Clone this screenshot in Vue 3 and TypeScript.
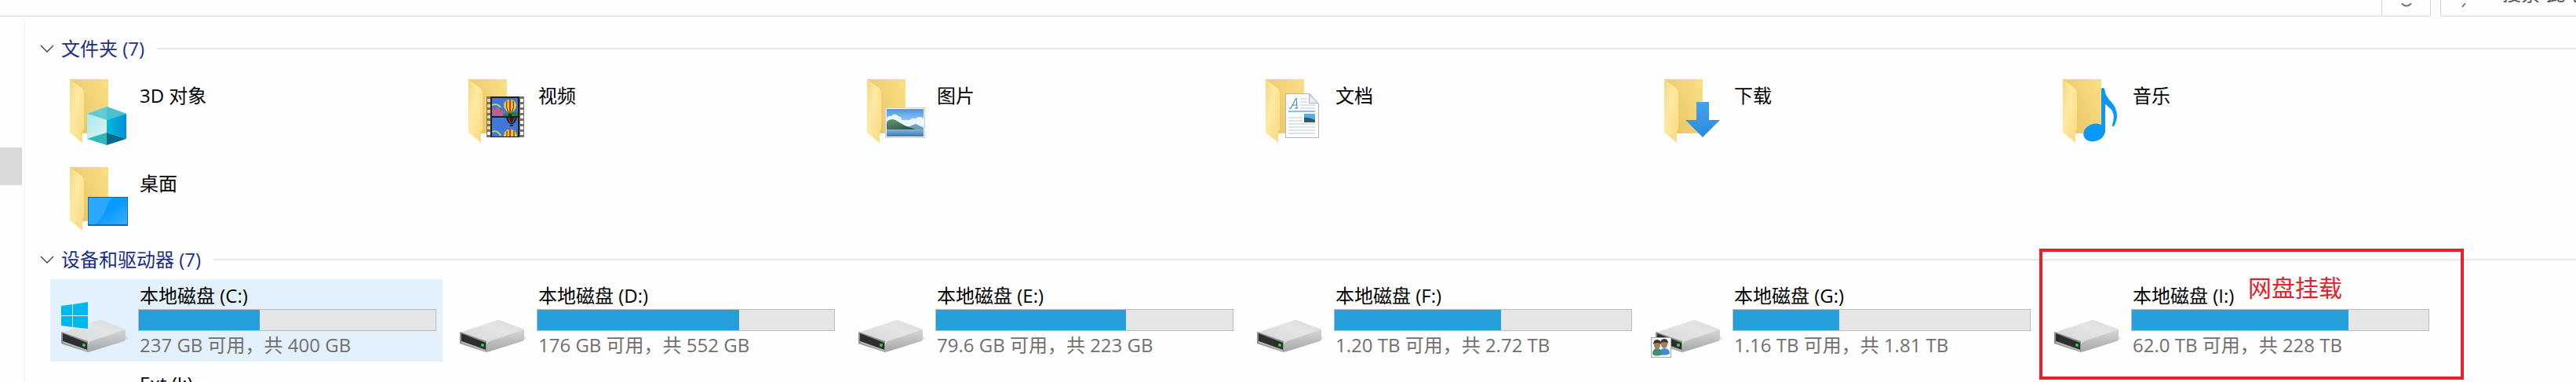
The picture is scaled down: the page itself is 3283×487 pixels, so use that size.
<script setup lang="ts">
import { ref } from 'vue'

type FolderKind = 'cube' | 'video' | 'picture' | 'document' | 'download' | 'music' | 'desktop'

interface Folder {
  name: string
  kind: FolderKind
}

interface Drive {
  name: string
  detail: string
  used: number
  system?: boolean
  shared?: boolean
  selected?: boolean
  note?: string
}

const folders: Folder[] = [
  { name: '3D 对象', kind: 'cube' },
  { name: '视频', kind: 'video' },
  { name: '图片', kind: 'picture' },
  { name: '文档', kind: 'document' },
  { name: '下载', kind: 'download' },
  { name: '音乐', kind: 'music' },
  { name: '桌面', kind: 'desktop' },
]

const drives: Drive[] = [
  { name: '本地磁盘 (C:)', detail: '237 GB 可用，共 400 GB', used: 40.7, system: true, selected: true },
  { name: '本地磁盘 (D:)', detail: '176 GB 可用，共 552 GB', used: 68 },
  { name: '本地磁盘 (E:)', detail: '79.6 GB 可用，共 223 GB', used: 64 },
  { name: '本地磁盘 (F:)', detail: '1.20 TB 可用，共 2.72 TB', used: 56 },
  { name: '本地磁盘 (G:)', detail: '1.16 TB 可用，共 1.81 TB', used: 35.7, shared: true },
  { name: '本地磁盘 (I:)', detail: '62.0 TB 可用，共 228 TB', used: 73, note: '网盘挂载' },
  { name: 'Ext (J:)', detail: '', used: 0 },
]

const foldersOpen = ref(true)
const drivesOpen = ref(true)
const perforations = [35, 42, 49, 56, 63, 70, 77]
</script>

<template>
  <div class="explorer">
    <svg class="defs" aria-hidden="true">
      <defs>
        <linearGradient id="folder-back" x1="0" y1="0.8" x2="1" y2="0.2">
          <stop offset="0.2" stop-color="#e9c868" />
          <stop offset="1" stop-color="#fbdd83" />
        </linearGradient>
        <linearGradient id="folder-flap" x1="0" y1="0" x2="1" y2="1">
          <stop offset="0" stop-color="#f5d67c" />
          <stop offset="0.4" stop-color="#ffe9a3" />
          <stop offset="1" stop-color="#f8d980" />
        </linearGradient>
        <linearGradient id="cube-right" x1="0" y1="0" x2="1" y2="0">
          <stop offset="0" stop-color="#00bcd2" />
          <stop offset="1" stop-color="#0090dc" />
        </linearGradient>
        <linearGradient id="cube-left" x1="0" y1="0" x2="1" y2="1">
          <stop offset="0" stop-color="#a9e8ec" />
          <stop offset="1" stop-color="#dcf5f6" />
        </linearGradient>
        <linearGradient id="screen" x1="0" y1="0" x2="1" y2="1">
          <stop offset="0" stop-color="#0c9bff" />
          <stop offset="0.5" stop-color="#0a99fd" />
          <stop offset="1" stop-color="#37aeff" />
        </linearGradient>
        <linearGradient id="sky" x1="0" y1="0" x2="0" y2="1">
          <stop offset="0" stop-color="#4a94e4" />
          <stop offset="1" stop-color="#d4ebfb" />
        </linearGradient>
        <linearGradient id="sea" x1="0" y1="0" x2="0" y2="1">
          <stop offset="0" stop-color="#86b4da" />
          <stop offset="1" stop-color="#3f78b4" />
        </linearGradient>
        <linearGradient id="hill" x1="0" y1="0" x2="1" y2="1">
          <stop offset="0" stop-color="#6d9878" />
          <stop offset="1" stop-color="#1d5038" />
        </linearGradient>
        <linearGradient id="arrow" x1="0" y1="0" x2="0" y2="1">
          <stop offset="0" stop-color="#46a0ea" />
          <stop offset="1" stop-color="#2b8be0" />
        </linearGradient>
        <linearGradient id="drive-top" x1="0" y1="1" x2="1" y2="0">
          <stop offset="0" stop-color="#d4d5d7" />
          <stop offset="0.6" stop-color="#e4e5e7" />
          <stop offset="1" stop-color="#dadbdd" />
        </linearGradient>
        <linearGradient id="drive-side" x1="0" y1="0" x2="0" y2="1">
          <stop offset="0" stop-color="#d6d7d9" />
          <stop offset="1" stop-color="#a5a6a8" />
        </linearGradient>
      </defs>
    </svg>

    <header class="toolbar">
      <div class="address"></div>
      <button class="refresh" type="button" aria-label="刷新">
        <svg viewBox="0 0 24 24" width="24" height="24" aria-hidden="true">
          <path d="M6 0a7 7 0 0 0 12 0" fill="none" stroke="#777" stroke-width="2" />
        </svg>
      </button>
      <label class="search">
        <svg viewBox="0 0 24 24" width="24" height="24" aria-hidden="true">
          <path d="M9 0 5 5" fill="none" stroke="#777" stroke-width="2" />
        </svg>
        <input type="text" aria-label="搜索" placeholder="搜索“此电脑”" />
      </label>
    </header>

    <div class="body">
      <aside class="nav"><div class="thumb"></div></aside>

      <main class="pane">
        <section class="group">
          <h2 class="heading">
            <button class="toggle" type="button" :aria-expanded="foldersOpen" @click="foldersOpen = !foldersOpen">
              <svg class="chevron" viewBox="0 0 18 10" aria-hidden="true"><path d="M1 1l8 8 8-8" /></svg>
              文件夹 (7)
            </button>
          </h2>
          <ul v-if="foldersOpen" class="tiles">
            <li v-for="f in folders" :key="f.name" class="tile">
              <svg class="icon" viewBox="-8 0 104 96" aria-hidden="true">
                <path d="M9 10h49v69H9z" fill="url(#folder-back)" />
                <path d="M9 10l15 11q3 3 3 7v45l-2 5v13L9 78z" fill="url(#folder-flap)" />

                <g v-if="f.kind === 'cube'">
                  <path d="M56 45l25 9-25 8-25-8z" fill="#5fcbd6" />
                  <path d="M56 45v17l25-8z" fill="#4dbfd0" />
                  <path d="M31 54l25 8v24l-25 0z" fill="url(#cube-left)" />
                  <path d="M56 62l25-8v32l-25-8z" fill="url(#cube-right)" />
                  <path d="M31 86l25-8v16z" fill="#2fb8b8" />
                  <path d="M56 78l25 8-25 8z" fill="#046b8c" />
                </g>

                <g v-else-if="f.kind === 'video'">
                  <path d="M32 32h48v52H32z" fill="#77736c" />
                  <path d="M37 32h37v52H37z" fill="#20201e" />
                  <g v-for="y in perforations" :key="y">
                    <rect x="33" :y="y" width="4" height="4" :fill="y < 77 ? '#f3d57a' : '#fff'" />
                    <rect x="75" :y="y" width="4" height="4" fill="#fff" />
                  </g>
                  <path d="M39 34h33v23H39zM39 59h33v24H39z" fill="#3f78d8" />
                  <path d="M51 57q10-6 21-5v5z" fill="#16863c" />
                  <path d="M39 45l4 5 3-5 4 6 3-2v8H39z" fill="#df5868" />
                  <path d="M39 51l4 4 3-4 4 6H39z" fill="#9965cc" />
                  <path d="M39 43q7-3 11 3M39 77q7-3 11 5" fill="none" stroke="#b6d36e" stroke-width="2" />
                  <path d="M54 43a8 7 0 0 1 16 0q0 5-6 10h-4q-6-5-6-10z" fill="#f5c72b" />
                  <path d="M58 38q-2 7 2 15M66 38q2 7-2 15" fill="none" stroke="#3f1f1b" stroke-width="1" />
                  <path d="M62 36v17" stroke="#d92922" stroke-width="2" />
                  <path d="M60 54h4v3h-4z" fill="#33231d" />
                  <path d="M57 59h14q-1 5-5 8h-4q-4-3-5-8z" fill="#232330" />
                  <path d="M60 59l3 7M68 59l-3 7" stroke="#d83a40" stroke-width="1" />
                  <path d="M62 68h4v2h-4z" fill="#26221f" />
                  <path d="M54 83q0-9 8-9t9 9z" fill="#f5c72b" />
                  <path d="M58 76v7M67 76v7" stroke="#3f1f1b" stroke-width="1" />
                  <path d="M62 74v9" stroke="#d92922" stroke-width="2" />
                </g>

                <g v-else-if="f.kind === 'picture'">
                  <path d="M32 46h51v39H32z" fill="#bfd3e4" />
                  <path d="M33 47h49v37H33z" fill="#fff" />
                  <path d="M34 48h47v26H34z" fill="url(#sky)" />
                  <path d="M34 60q2-4 6-3 4-5 9 0 4 1 4 5h10q4-3 8-2 5-4 10 0v10H34z" fill="#eaf5fd" />
                  <path d="M54 74l12-5 5-2 10 5v3H54z" fill="#6f9dbb" />
                  <path d="M34 64q6-5 11-2l12 7 14 5H34z" fill="url(#hill)" />
                  <path d="M34 74h47v9H34z" fill="url(#sea)" />
                </g>

                <g v-else-if="f.kind === 'document'">
                  <path d="M34 28h31l12 13v44H34z" fill="#aeb6bc" />
                  <path d="M35 29h29v12h12v43H35z" fill="#fbfcfd" />
                  <path d="M65 30l10 10H65z" fill="#e7ebee" />
                  <path
                    d="M53 35h9M53 39h9M53 43h19M53 47h19M38 59h18M38 63h18M38 67h34M38 71h34M38 75h34M38 79h34"
                    stroke="#c3cbd0"
                  />
                  <path d="M38 51h34" stroke="#1c86c6" stroke-width="1" />
                  <path d="M39 47h3m4 0h4M41 47l7-13 1 13M43 43h5" fill="none" stroke="#1c86c6" stroke-width="1" />
                  <path d="M58 54h14v11H58z" fill="#57aee9" />
                  <path d="M58 59q5-1 14 3v3H58z" fill="#2a5f6a" />
                </g>

                <path
                  v-else-if="f.kind === 'download'"
                  d="M50 39h16v23h14L58 84 36 62h14z"
                  fill="url(#arrow)"
                />

                <g v-else-if="f.kind === 'music'" fill="#0a97f5">
                  <path
                    d="M58 22q2-2 4 0 1 9 7 15 9 9 9 20 0 6-4 13-3 0-2-2 5-15-4-22-3-3-5-4v36H58z"
                  />
                  <ellipse cx="49" cy="78" rx="14" ry="11" transform="rotate(-20 49 78)" />
                </g>

                <g v-else>
                  <path d="M32 48h51v37H32z" fill="#16689f" />
                  <path d="M33 49h49v34H33z" fill="url(#screen)" />
                  <path d="M33 49h31q-5 3-8 12-4 12-14 22h-9z" fill="#2aa7ff" />
                </g>
              </svg>
              <span class="folder-name">{{ f.name }}</span>
            </li>
          </ul>
        </section>

        <section class="group">
          <h2 class="heading">
            <button class="toggle" type="button" :aria-expanded="drivesOpen" @click="drivesOpen = !drivesOpen">
              <svg class="chevron" viewBox="0 0 18 10" aria-hidden="true"><path d="M1 1l8 8 8-8" /></svg>
              设备和驱动器 (7)
            </button>
          </h2>
          <ul v-if="drivesOpen" class="tiles">
            <li v-for="d in drives" :key="d.name" class="tile" :class="{ selected: d.selected }">
              <svg class="icon" viewBox="-8 0 104 96" aria-hidden="true">
                <path d="M32 89l48-16 4-1-3-4z" fill="#00000014" />
                <path d="M-2 64L43 49q4-2 8 0l27 10q2 1 1 2L34 77z" fill="url(#drive-top)" />
                <path d="M32 79q1-3 4-4l44-15v12q0 2-2 3L36 88l-4 1z" fill="url(#drive-side)" />
                <path d="M-2 63l34 12v14L-2 78z" fill="#8d8f91" />
                <path d="M0 65l31 12v9L0 75z" fill="#2e2e2f" />
                <path d="M0 75l31 11v2L0 77z" fill="#b9babc" />
                <circle cx="27" cy="80" r="2" fill="#22dd33" />
                <path
                  v-if="d.system"
                  d="M-2 30l14-2v14H-2zM13 28l19-3v17H13zM-2 43h14v14l-14-2zM13 43h19v16l-19-2z"
                  fill="#00b7f0"
                />
                <g v-if="d.shared">
                  <path d="M-8 70h26v26H-8z" fill="#a5abae" />
                  <path d="M-7 71h24v24H-7z" fill="#f7f9fa" />
                  <path d="M3 92q0-8 6-8 7 0 7 7-6 3-13 1z" fill="#3c8fd6" />
                  <ellipse cx="9" cy="79" rx="4" ry="5" fill="#a87c58" />
                  <path d="M4 78q0-6 5-6t5 6q-2-2-5-2t-5 2z" fill="#3c352f" />
                  <path d="M-6 92q0-8 6-8t6 8q-6 3-12 0z" fill="#3d8f6e" />
                  <ellipse cx="0" cy="80" rx="4" ry="5" fill="#a87c58" />
                  <path d="M-5 79q0-6 5-6t5 6q-2-2-5-2t-5 2z" fill="#3c352f" />
                </g>
              </svg>
              <div class="drive-info">
                <span class="drive-name">{{ d.name }}</span>
                <div class="meter" role="meter" :aria-label="d.name" :aria-valuenow="d.used" aria-valuemin="0" aria-valuemax="100">
                  <div class="fill" :style="{ width: d.used + '%' }"></div>
                </div>
                <span class="drive-detail">{{ d.detail }}</span>
              </div>
              <div v-if="d.note" class="marker"><span class="marker-note">{{ d.note }}</span></div>
            </li>
          </ul>
        </section>
      </main>
    </div>
  </div>
</template>

<style>
body {
  margin: 0;
  background: #fefefe;
}
</style>

<style scoped>
.explorer {
  display: flex;
  flex-direction: column;
  height: 100vh;
  overflow: hidden;
  background: #fefefe;
  color: #000;
  font-family: 'Open Sans', 'Noto Sans CJK SC', sans-serif;
  font-size: 24px;
}
.defs {
  position: absolute;
  width: 0;
  height: 0;
}
.toolbar {
  display: flex;
  flex: none;
  align-items: flex-end;
  height: 21px;
  overflow: hidden;
}
.address,
.refresh,
.search {
  box-sizing: border-box;
  height: 40px;
  border: 1px solid #d9d9d9;
  background: transparent;
}
.address {
  flex: 1;
  border-left: 0;
  border-right: 0;
}
.refresh {
  display: flex;
  align-items: flex-end;
  justify-content: center;
  width: 63px;
  padding: 0;
}
.search {
  display: flex;
  align-items: flex-end;
  width: 173px;
  margin-left: 12px;
  padding-left: 22px;
  border-right: 0;
}
.refresh svg,
.search svg {
  flex: none;
  margin-bottom: -8px;
}
.search input {
  box-sizing: border-box;
  flex: 1;
  min-width: 0;
  height: 32px;
  margin-bottom: 12px;
  padding: 0 0 0 32px;
  border: 0;
  background: transparent;
  font: inherit;
  line-height: 32px;
}
.search input::placeholder {
  color: #555;
}
.body {
  display: flex;
  flex: 1;
  min-height: 0;
}
.nav {
  flex: none;
  width: 31px;
}
.thumb {
  width: 28px;
  height: 48px;
  margin-top: 167px;
  background: #d9d9d9;
}
.pane {
  flex: 1;
  min-width: 0;
  margin-top: 7px;
  padding: 18px 0 0 19px;
  border-left: 1px solid #f3f3f3;
}
.group + .group {
  margin-top: 11px;
}
.heading {
  display: flex;
  align-items: center;
  gap: 16px;
  height: 32px;
  margin: 0 0 9px;
  font-weight: 400;
}
.heading::after {
  content: '';
  flex: 1;
  height: 2px;
  background: #e6e6e6;
}
.toggle {
  display: flex;
  align-items: center;
  gap: 9px;
  padding: 0;
  border: 0;
  background: none;
  color: #1c2f86;
  font-family: inherit;
  font-size: 24px;
  line-height: 32px;
}
.chevron {
  width: 18px;
  height: 10px;
  fill: none;
  stroke: #444;
  stroke-width: 1.4;
}
.tiles {
  display: grid;
  grid-template-columns: repeat(auto-fill, 500px);
  gap: 7px 8px;
  margin: 0;
  padding: 0 0 0 13px;
  list-style: none;
}
.tile {
  position: relative;
  box-sizing: border-box;
  display: flex;
  height: 105px;
  padding: 4px 8px;
}
.tile.selected {
  background: #e3f1fd;
}
.icon {
  flex: none;
  width: 104px;
  height: 96px;
}
.folder-name {
  margin-top: 14px;
  padding-left: 2px;
  line-height: 34px;
}
.drive-info {
  display: flex;
  flex: none;
  flex-direction: column;
  width: 380px;
}
.drive-name,
.drive-detail {
  padding-left: 2px;
  line-height: 34px;
  white-space: nowrap;
}
.drive-detail {
  padding-top: 1px;
  color: #707070;
}
.meter {
  box-sizing: border-box;
  height: 29px;
  border: 1px solid #bcbcbc;
  background: #e6e6e6;
}
.fill {
  height: 100%;
  background: #26a0da;
}
.marker {
  position: absolute;
  top: -39px;
  left: -5px;
  box-sizing: border-box;
  width: 541px;
  height: 167px;
  border: 4px solid #e62129;
}
.marker-note {
  position: absolute;
  top: 26px;
  left: 262px;
  color: #e62129;
  font-size: 30px;
  line-height: 40px;
  white-space: nowrap;
}
</style>
